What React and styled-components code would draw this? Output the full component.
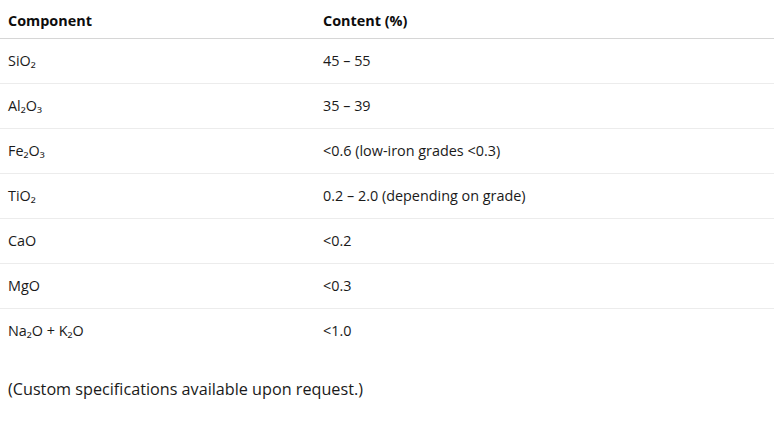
import React from 'react';
import styled, { createGlobalStyle } from 'styled-components';

const Global = createGlobalStyle`
  body {
    margin: 0;
    background: #fff;
    font-family: "Open Sans", "Noto Sans", sans-serif;
    color: #0d0d0d;
  }
`;

const Page = styled.div`
  width: 774px;
`;

const Table = styled.table`
  width: 100%;
  border-collapse: collapse;
  table-layout: fixed;
  font-size: 14.4px;
`;

const Head = styled.th`
  box-sizing: border-box;
  text-align: left;
  font-weight: 700;
  height: 38px;
  padding: 3px 8px 0;
  border-bottom: 1px solid #d6d6d6;
  width: ${(p) => p.w || 'auto'};
`;

const Row = styled.tr`
  border-bottom: 1px solid ${(p) => (p.last ? 'transparent' : '#ececec')};
`;

const Cell = styled.td`
  height: 44px;
  padding: 0 8px;
  color: #1a1a1a;
`;

const Note = styled.p`
  margin: 24px 0 0;
  padding: 0 8px;
  font-size: 16.2px;
  color: #1a1a1a;
`;

const rows = [
  ['SiO₂', '45 – 55'],
  ['Al₂O₃', '35 – 39'],
  ['Fe₂O₃', '<0.6 (low-iron grades <0.3)'],
  ['TiO₂', '0.2 – 2.0 (depending on grade)'],
  ['CaO', '<0.2'],
  ['MgO', '<0.3'],
  ['Na₂O + K₂O', '<1.0'],
];

export default function App() {
  return (
    <Page>
      <Global />
      <Table>
        <thead>
          <tr>
            <Head w="315px">Component</Head>
            <Head>Content (%)</Head>
          </tr>
        </thead>
        <tbody>
          {rows.map(([c, v], i) => (
            <Row key={c} last={i === rows.length - 1}>
              <Cell>{c}</Cell>
              <Cell>{v}</Cell>
            </Row>
          ))}
        </tbody>
      </Table>
      <Note>(Custom specifications available upon request.)</Note>
    </Page>
  );
}
